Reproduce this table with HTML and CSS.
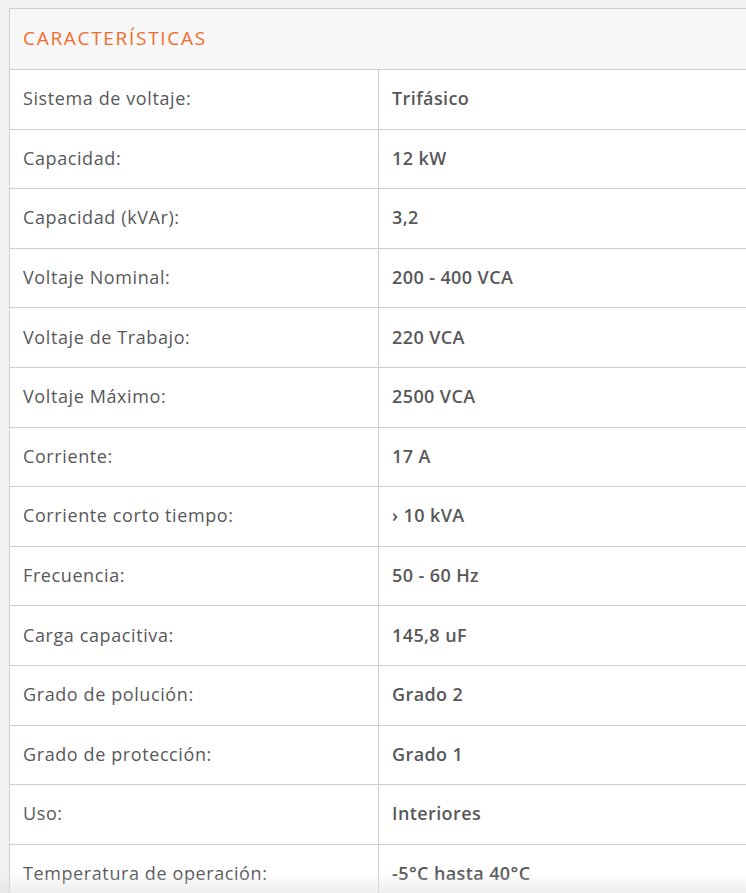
FILE: index.html
```html
<!DOCTYPE html>
<html lang="es">
<head>
<meta charset="utf-8">
<title>Características</title>
<link rel="stylesheet" href="styles.css">
</head>
<body>
<div class="frame">
  <table class="specs">
    <colgroup><col class="c1"><col class="c2"></colgroup>
    <thead>
      <tr><th colspan="2">CARACTERÍSTICAS</th></tr>
    </thead>
    <tbody>
      <tr><td class="k">Sistema de voltaje:</td><td class="v">Trifásico</td></tr>
      <tr><td class="k">Capacidad:</td><td class="v">12 kW</td></tr>
      <tr><td class="k">Capacidad (kVAr):</td><td class="v">3,2</td></tr>
      <tr><td class="k">Voltaje Nominal:</td><td class="v">200 - 400 VCA</td></tr>
      <tr><td class="k">Voltaje de Trabajo:</td><td class="v">220 VCA</td></tr>
      <tr><td class="k">Voltaje Máximo:</td><td class="v">2500 VCA</td></tr>
      <tr><td class="k">Corriente:</td><td class="v">17 A</td></tr>
      <tr><td class="k">Corriente corto tiempo:</td><td class="v">› 10 kVA</td></tr>
      <tr><td class="k">Frecuencia:</td><td class="v">50 - 60 Hz</td></tr>
      <tr><td class="k">Carga capacitiva:</td><td class="v">145,8 uF</td></tr>
      <tr><td class="k">Grado de polución:</td><td class="v">Grado 2</td></tr>
      <tr><td class="k">Grado de protección:</td><td class="v">Grado 1</td></tr>
      <tr><td class="k">Uso:</td><td class="v">Interiores</td></tr>
      <tr><td class="k">Temperatura de operación:</td><td class="v">-5°C hasta 40°C</td></tr>
    </tbody>
  </table>
  <div class="fade"></div>
</div>
</body>
</html>
```
FILE: styles.css
```css
html, body {
  margin: 0;
  padding: 0;
  height: 100%;
  overflow: hidden;
  background: #f1f1f1;
}
body {
  font-family: "Open Sans", Lato, sans-serif;
  color: #58585a;
}
.frame {
  position: relative;
  padding: 8px 0 0 9px;
  height: 100%;
  box-sizing: border-box;
  overflow: hidden;
}
.specs {
  width: 760px;
  border-collapse: collapse;
  background: #fff;
  table-layout: fixed;
}
.specs col.c1 {
  width: 369px;
}
.specs th,
.specs td {
  border: 1px solid #cfcfcf;
  text-align: left;
  vertical-align: middle;
  padding: 0 0 0 13px;
  height: 59.6px;
  box-sizing: border-box;
  white-space: nowrap;
}
.specs th {
  background: #f7f7f7;
  color: #f26c2b;
  font-weight: 400;
  font-size: 19px;
  letter-spacing: 1.7px;
  height: 61px;
  padding-bottom: 3px;
}
.specs td.k {
  font-size: 18px;
  font-weight: 400;
  letter-spacing: 0.6px;
  padding-bottom: 2px;
}
.specs td.v {
  font-size: 18px;
  font-weight: 600;
  letter-spacing: 0.4px;
  padding-bottom: 2px;
}
.fade {
  position: absolute;
  left: 0;
  right: 0;
  bottom: 0;
  height: 20px;
  background: linear-gradient(to bottom, rgba(240,240,240,0), rgba(225,225,225,0.6));
  pointer-events: none;
}
```
